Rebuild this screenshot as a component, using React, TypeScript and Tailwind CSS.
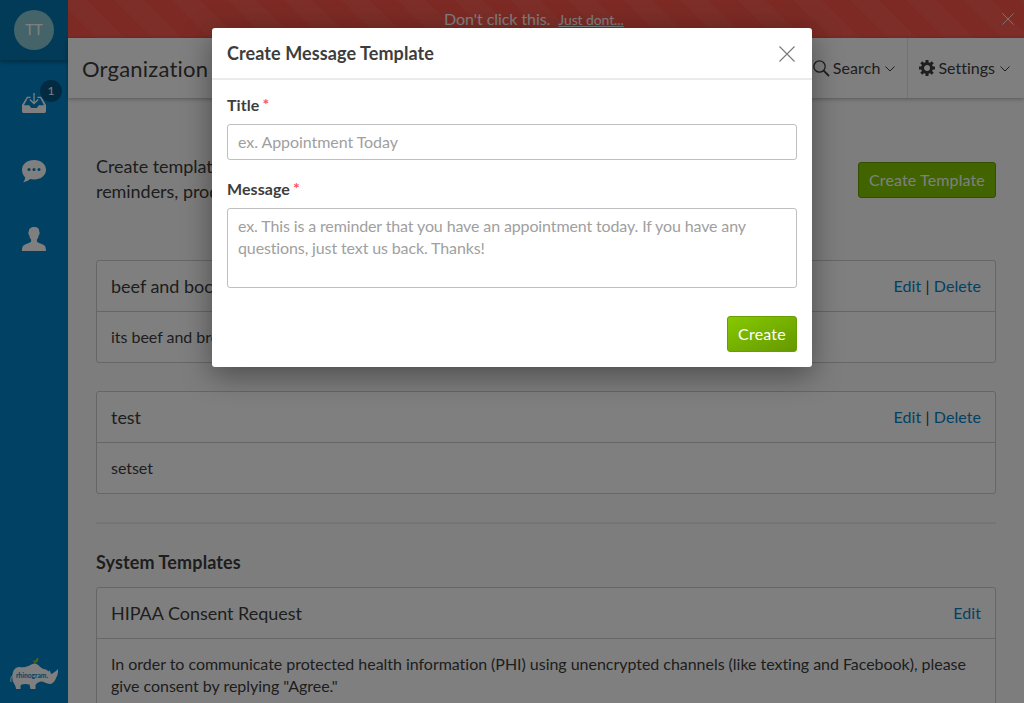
import React from "react";

const cross = (size: number, cls: string) => (
  <svg width={size} height={size} viewBox="0 0 16 16" fill="none" stroke="currentColor" className={cls}>
    <path d="M0.5 0.5 15.5 15.5M15.5 0.5 0.5 15.5" strokeWidth="1.1" />
  </svg>
);

const Chevron = () => (
  <svg width="10" height="6" viewBox="0 0 10 6" fill="none" stroke="currentColor" className="mt-0.5 ml-[5px]">
    <path d="M0.5 0.5 5 5 9.5 0.5" />
  </svg>
);

function InboxIcon() {
  return (
    <svg width="24" height="20" viewBox="0 0 24 20" fill="#fff">
      <path d="M5 3.7h3.500v1.300H5.800L2 12.300H7.200l2 2.700h5.600l2-2.700H22L18.200 5H15.500V3.700H19.200L24 12v6.600q0 1.400-1.400 1.400H1.400Q0 20 0 18.600V12z" />
      <path d="M11.400 0h1.300v9l3-3 .9.900L12 11.500 7.400 6.900l.9-.9 3.100 3z" />
    </svg>
  );
}

function ChatIcon() {
  return (
    <svg width="24" height="23" viewBox="0 0 24 23">
      <path d="M12 0c6.800 0 12 4.100 12 9.700s-5.200 9.800-12 9.800c-1.400 0-2.800-.2-4-.5-1.600 1.600-4 2.900-7 3.200 1.300-1.400 2.200-3 2.100-5C1.200 15.300 0 12.700 0 9.700 0 4.100 5.200 0 12 0z" fill="#fff" />
      <g fill="#0384c8"><circle cx="7" cy="9.500" r="1.500" /><circle cx="12" cy="9.500" r="1.500" /><circle cx="17" cy="9.500" r="1.500" /></g>
    </svg>
  );
}

function PersonIcon() {
  return (
    <svg width="24" height="24" viewBox="0 0 24 24" fill="#fff">
      <path d="M7.200 2.200C8.500.5 10.200 0 12.500 0c3.300 0 4.900 1.500 4.700 4.500.8.7.5 3.200-.5 3.900-.3 2-1 3.200-1.800 4v2.200c.8 1.300 3 1.800 5.300 2.600 2.800 1 3.800 2.300 3.800 6.800H0c0-4.500 1-5.800 3.800-6.800 2.300-.8 4.500-1.300 5.300-2.600v-2.200c-.8-.8-1.500-2-1.800-4-1-.7-1.300-3.200-.5-3.900z" />
    </svg>
  );
}

function Logo() {
  return (
    <svg width="50" height="34" viewBox="0 0 50 34">
      <path d="M4 17C2 18.500 1.500 21 2 24" fill="none" stroke="#fff" strokeWidth="1" />
      <path d="M3.500 17C3.800 12.500 6 9.500 10 9c4 .5 7 .3 10.500-1.500 3-1.800 5-2.500 7-1.500 3 1.500 4 4 7 5 1.500.3 3.300.5 5 2.500l1.300-1.200 1.200 3.700c1.800-.5 4.500-2.200 7-5 .3 3.500-.3 6.500-2 9-.8 2.500-2.500 5.500-6 6-3.500-.2-6-2.500-9-2.500-2.500.5-4.500 1.500-5.500 3.500V31h-5l-1-4.500c-3.500-.8-6-.8-8.500.3-.7 1.200-.5 2.700-.5 4.200H7c0-3-2-5-3-7.500-.7-2-.8-4.500-.5-6.500z" fill="#fff" />
      <path d="M23.500 2.500c1.800.6 3 .3 3.500-.8.2-1 .8-1.700 2-1.700l.5.700c-.3 2.300-1 3.800-3 3.800l-.3 1.500-.8-1.600C24.500 4 23.800 3.300 23.500 2.500z" fill="#a8c800" />
      <text x="7" y="20.200" fontSize="7.200" fontWeight="700" fontFamily="Lato, sans-serif" textLength="32" lengthAdjust="spacingAndGlyphs" fill="#0384c8">rhinogram.</text>
    </svg>
  );
}

function Card({ title, body, deletable = true }: { title: string; body: React.ReactNode; deletable?: boolean }) {
  return (
    <section className="rounded-[3px] border border-[#ccc] bg-white">
      <header className="flex h-[51px] items-center justify-between border-b border-[#ccc] px-3.5">
        <h3 className="text-[18px] tracking-[-0.03px]">{title}</h3>
        <div className="text-[16px] tracking-[0.07px]">
          <a className="text-[#0384c8]">Edit</a>
          {deletable && <> | <a className="text-[#0384c8]">Delete</a></>}
        </div>
      </header>
      <div className="px-3.5 py-3.5 text-[16px] leading-[22px] tracking-[-0.034px]">{body}</div>
    </section>
  );
}

function FieldLabel({ children }: { children: React.ReactNode }) {
  return (
    <label className="flex gap-[3px] text-[16px] leading-[22px] font-bold tracking-[0.06px]">
      {children}
      <span className="-mt-px text-[#fb5549]">*</span>
    </label>
  );
}

export default function App() {
  return (
    <div className="relative flex h-[703px] w-[1024px] overflow-hidden bg-[#fafafa] font-[Lato,sans-serif] text-[#3d3d3d] [font-variant-ligatures:none]">
      <aside className="flex w-[68px] shrink-0 flex-col items-center bg-[#0384c8]">
        <div className="flex h-[60px] w-full items-center justify-center bg-[#0476b0] shadow-[0_2px_4px_rgba(0,0,0,0.35)]">
          <div className="flex size-10 items-center justify-center rounded-full bg-[#88c8d4] pb-px text-[15px] text-white">TT</div>
        </div>
        <div className="relative mt-[33px] h-5">
          <InboxIcon />
          <span className="absolute -top-[13px] left-[18px] flex size-[22px] items-center justify-center rounded-full bg-[#045580] text-[12px] text-white">1</span>
        </div>
        <div className="mt-[47px] h-[23px]"><ChatIcon /></div>
        <div className="mt-11 h-6"><PersonIcon /></div>
        <div className="mt-auto mb-[11px] h-[34px]"><Logo /></div>
      </aside>

      <div className="flex min-w-0 flex-1 flex-col">
        <div className="flex h-[38px] shrink-0 items-center bg-[repeating-linear-gradient(45deg,#fb5549,#fb5549_20px,#fb5c51_20px,#fb5c51_40px)] pr-2.5 text-white">
          <p className="ml-[376px] text-[16px] tracking-[-0.06px]">Don't click this.</p>
          <a className="ml-2 text-[14px] tracking-[-0.1px] underline">Just dont...</a>
          {cross(12, "ml-auto")}
        </div>
        <div className="flex h-[60px] shrink-0 items-center bg-white pl-3.5 shadow-[0_1px_4px_rgba(0,0,0,0.3)]">
          <h1 className="text-[22px] tracking-[0.2px] whitespace-nowrap">Organization</h1>
          <div className="ml-auto flex h-full items-center border-r border-[#e4e4e4] pr-3 text-[16px] tracking-[0.1px]">
            <svg width="17" height="17" viewBox="0 0 17 17" fill="none" stroke="currentColor" className="mr-[3px]">
              <circle cx="6.500" cy="6.500" r="5.700" strokeWidth="1.300" /><path d="M10.600 10.600 16 16" strokeWidth="1.800" />
            </svg>
            Search<Chevron />
          </div>
          <div className="flex h-full items-center pr-3.5 pl-[11px] text-[16px]">
            <svg width="16" height="16" viewBox="0 0 16 16" className="mr-[3px]" fill="none" stroke="currentColor">
              <circle cx="8" cy="8" r="4.500" strokeWidth="3" />
              <path d="M8 0v3M8 13v3M0 8h3M13 8h3M2.300 2.300l2.200 2.200M11.500 11.500l2.200 2.200M2.300 13.700l2.200-2.200M11.500 4.500l2.200-2.200" strokeWidth="3" />
            </svg>
            Settings<Chevron />
          </div>
        </div>

        <main className="flex flex-col px-7 pt-14">
          <div className="flex items-center justify-between">
            <p className="text-[18px] leading-[25px] tracking-[-0.05px]">Create templates for<br />reminders, products</p>
            <button className="mt-0.5 h-9 w-[138px] rounded-[3px] border border-[#659f00] bg-[#82c600] text-[16px] tracking-[0.12px] text-white">Create Template</button>
          </div>
          <div className="mt-14 flex flex-col gap-7">
            <Card title="beef and boccoli" body="its beef and broccoli" />
            <Card title="test" body="setset" />
          </div>
          <hr className="mt-7 border-t-2 border-[#ebebeb]" />
          <h2 className="mt-[26px] mb-3 text-[18px] leading-[25px] font-bold tracking-[0.12px]">System Templates</h2>
          <Card
            title="HIPAA Consent Request"
            deletable={false}
            body={<>In order to communicate protected health information (PHI) using unencrypted channels (like texting and Facebook), please give consent by replying "Agree."</>}
          />
        </main>
      </div>

      <div className="absolute inset-0 flex items-start justify-center bg-black/50 pt-7">
        <div role="dialog" className="flex h-[339px] w-[600px] flex-col rounded-[3px] bg-white shadow-[0_8px_30px_rgba(0,0,0,0.4)]">
          <header className="flex h-[52px] items-center justify-between border-b-2 border-[#ebebeb] pr-[17px] pl-[15px]">
            <h2 className="text-[18px] font-bold tracking-[0.09px]">Create Message Template</h2>
            {cross(16, "mt-0.5 text-[#777]")}
          </header>
          <form className="flex flex-col px-[15px] pt-3.5">
            <FieldLabel>Title</FieldLabel>
            <input placeholder="ex. Appointment Today" className="mt-2 h-9 rounded-[3px] border border-[#bfbfbf] px-2.5 pb-0.5 text-[16px] tracking-[-0.06px] placeholder:text-[#a0a0a0]" />
            <div className="mt-[18px]"><FieldLabel>Message</FieldLabel></div>
            <textarea placeholder="ex. This is a reminder that you have an appointment today. If you have any questions, just text us back. Thanks!" className="mt-2 h-20 resize-none rounded-[3px] border border-[#bfbfbf] px-2.5 py-1.5 text-[16px] leading-[22px] tracking-[-0.125px] placeholder:text-[#a0a0a0]" />
            <button type="button" className="mt-7 h-9 w-[70px] self-end rounded-[3px] border border-[#659f00] bg-linear-to-br from-[#86c900] to-[#659900] text-[16px] tracking-[0.2px] text-white">Create</button>
          </form>
        </div>
      </div>
    </div>
  );
}
